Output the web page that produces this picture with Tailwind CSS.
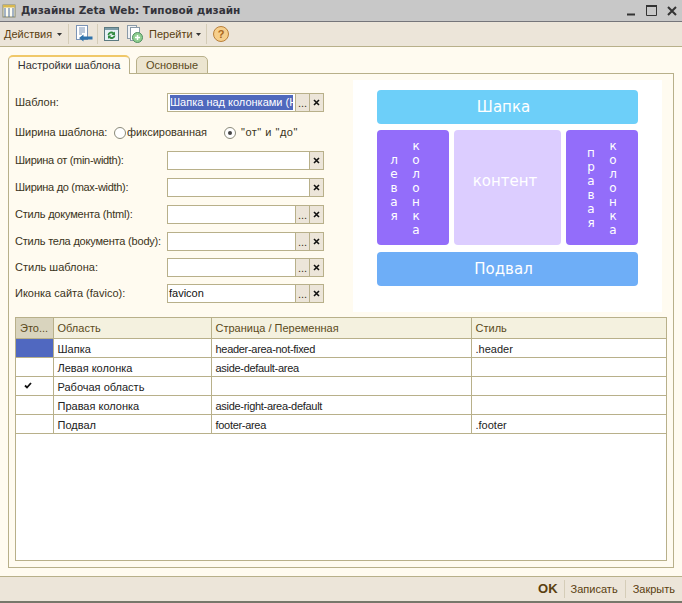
<!DOCTYPE html>
<html lang="ru">
<head>
  <meta charset="UTF-8">
  <title>Дизайны Zeta Web: Типовой дизайн</title>
  <script src="https://cdn.jsdelivr.net/npm/@tailwindcss/browser@4"></script>
</head>
<body class="bg-[#fffbf0] font-['Liberation_Sans',sans-serif] text-[11px] text-[#3a3320]">
<div class="w-[682px] h-[603px] flex flex-col overflow-hidden">

  <!-- Title bar -->
  <header class="h-[22px] bg-[#c8c8c8] border-b border-[#75757a] flex items-center pl-[2px] pr-[5px]">
    <svg width="14" height="14" viewBox="0 0 14 14" class="mr-[5px]">
      <rect x="1" y="1" width="12" height="12" fill="#fdfcf0" stroke="#8a8a6a"/>
      <rect x="1" y="1" width="12" height="2.500" fill="#d8b850"/>
      <path d="M3 4v9M7 4v9M11 4v9" stroke="#4a6a9a"/>
    </svg>
    <span class="font-['DejaVu_Sans',sans-serif] font-bold text-[10.5px] text-[#33333a]">Дизайны Zeta Web: Типовой дизайн</span>
    <div class="ml-auto flex items-center gap-[10px]">
      <svg width="9" height="11" viewBox="0 0 9 11"><path d="M0 9.500h8" stroke="#333" stroke-width="2"/></svg>
      <svg width="11" height="11" viewBox="0 0 11 11"><path d="M.5 1.500h10v9H.5z" fill="none" stroke="#333"/><path d="M0 1h11" stroke="#333" stroke-width="2"/></svg>
      <svg width="10" height="10" viewBox="0 0 10 10"><path d="M1 1l8 8M9 1l-8 8" stroke="#333" stroke-width="2"/></svg>
    </div>
  </header>

  <!-- Toolbar -->
  <nav class="h-[25px] bg-[#ece5d9] border-b border-[#b8b08a] flex items-center pl-[4px] text-[#5a4010]">
    <span class="w-[49px] whitespace-nowrap">Действия</span>
    <svg width="5" height="3" viewBox="0 0 5 3" class="ml-[4px]"><path d="M0 0h5L2.500 3z" fill="#333"/></svg>
    <div class="w-px h-[20px] bg-[#d5cdb8] ml-[6px]"></div>
    <svg width="18" height="18" viewBox="0 0 18 18" class="ml-[6px]">
      <rect x="1.500" y=".5" width="11" height="14" fill="#fff" stroke="#7b93b5"/>
      <path d="M4 3h6M4 5h6M4 7h6M4 9h3" stroke="#7b93b5"/>
      <path d="M4 13l4.500-3.500v2h9v3h-9v2z" fill="#2f72ab"/>
    </svg>
    <div class="w-px h-[20px] bg-[#d5cdb8] ml-[4px]"></div>
    <svg width="15" height="14" viewBox="0 0 15 14" class="ml-[6px]">
      <rect x=".5" y=".5" width="14" height="13" fill="#e7f0f5" stroke="#5b7a80"/>
      <rect x="1" y="1" width="13" height="2" fill="#7d9da8"/>
      <path d="M3.500 8a4 4 0 0 1 6.500-2.500l1-1V8H7.500l1.200-1.200A2.300 2.300 0 0 0 5.200 8z" fill="#2f8a3f"/>
      <path d="M11.500 8.500a4 4 0 0 1-6.500 2.500l-1 1V8.500h3.500l-1.200 1.200a2.300 2.300 0 0 0 3.500-1.200z" fill="#2f8a3f"/>
    </svg>
    <svg width="16" height="18" viewBox="0 0 16 18" class="ml-[8px]">
      <rect x=".5" y=".5" width="9" height="13" fill="#f0f2f4" stroke="#8a9aa8"/>
      <rect x="3.500" y="2.500" width="9" height="13" fill="#fff" stroke="#8a9aa8"/>
      <circle cx="10.500" cy="12.500" r="5" fill="#8fcf90" stroke="#4f8f60"/>
      <path d="M10.500 10v5M8 12.500h5" stroke="#fff" stroke-width="1.500"/>
    </svg>
    <span class="ml-[6px] w-[42px] whitespace-nowrap">Перейти</span>
    <svg width="5" height="3" viewBox="0 0 5 3" class="ml-[5px]"><path d="M0 0h5L2.500 3z" fill="#333"/></svg>
    <div class="w-px h-[20px] bg-[#d5cdb8] ml-[5px]"></div>
    <div class="ml-[6px] w-[16px] h-[16px] rounded-full border border-[#b9803a] bg-[#f6cf8c] flex items-center justify-center text-[11px] font-bold text-[#a8661c]">?</div>
  </nav>

  <!-- Tabs and panel -->
  <main class="flex-1 px-[8px] pt-[8px] pb-[8px] flex flex-col min-h-0">
    <div class="flex items-end h-[19px] relative z-10">
      <div class="w-[122px] h-[19px] bg-[#fffbf0] border border-b-0 border-[#b8b08a] border-t-2 border-t-[#f0c868] rounded-t-[5px] flex items-center justify-center text-[#333]">Настройки шаблона</div>
      <div class="w-[72px] h-[18px] ml-[6px] bg-[#ece5d0] border border-[#b8b08a] rounded-t-[5px] flex items-center justify-center text-[#5a4a20]">Основные</div>
    </div>
    <section class="flex-1 min-h-0 -mt-px border border-[#b8b08a] px-[6px] pt-[6px] pb-[6px] flex flex-col">
      <div class="flex">
        <!-- Form -->
        <div class="w-[309px] pt-[13px] flex flex-col">
          <div class="flex items-center h-[19px]">
            <label class="w-[152px]">Шаблон:</label>
            <div class="w-[157px] h-[19px] flex border border-[#b8b08a] bg-white">
              <div class="flex-1 min-w-0 pl-[2px] pt-[1px]"><div class="w-[123px] h-[15px] overflow-hidden whitespace-nowrap leading-[15px] bg-[#4f68bd] text-white">Шапка над колонками (Н</div></div>
              <button class="w-[14px] bg-[#ece5d9] border-l border-[#b8b08a] text-[11px] leading-[14px]">...</button>
              <button class="w-[14px] bg-[#ece5d9] border-l border-[#b8b08a] flex items-center justify-center"><svg width="7" height="7" viewBox="0 0 7 7"><path d="M1 1l5 5M6 1l-5 5" stroke="#111" stroke-width="1.600"/></svg></button>
            </div>
          </div>
          <div class="flex items-center h-[19px] mt-[11px]">
            <label class="w-[99px] whitespace-nowrap">Ширина шаблона:</label>
            <span class="w-[12px] h-[12px] rounded-full border border-[#8a8a7a] bg-white"></span>
            <span class="w-[98px] pl-[1px]">фиксированная</span>
            <span class="w-[12px] h-[12px] rounded-full border border-[#8a8a7a] bg-white flex items-center justify-center"><span class="w-[4px] h-[4px] rounded-full bg-[#444]"></span></span>
            <span class="ml-[5px] tracking-[0.5px]">"от" и "до"</span>
          </div>
          <div class="flex items-center h-[19px] mt-[9px]">
            <label class="w-[152px] tracking-[-0.3px]">Ширина от (min-width):</label>
            <div class="w-[157px] h-[19px] flex border border-[#b8b08a] bg-white">
              <div class="flex-1"></div>
              <button class="w-[14px] bg-[#ece5d9] border-l border-[#b8b08a] flex items-center justify-center"><svg width="7" height="7" viewBox="0 0 7 7"><path d="M1 1l5 5M6 1l-5 5" stroke="#111" stroke-width="1.600"/></svg></button>
            </div>
          </div>
          <div class="flex items-center h-[19px] mt-[8px]">
            <label class="w-[152px] tracking-[-0.3px]">Ширина до (max-width):</label>
            <div class="w-[157px] h-[19px] flex border border-[#b8b08a] bg-white">
              <div class="flex-1"></div>
              <button class="w-[14px] bg-[#ece5d9] border-l border-[#b8b08a] flex items-center justify-center"><svg width="7" height="7" viewBox="0 0 7 7"><path d="M1 1l5 5M6 1l-5 5" stroke="#111" stroke-width="1.600"/></svg></button>
            </div>
          </div>
          <div class="flex items-center h-[19px] mt-[8px]">
            <label class="w-[152px] tracking-[-0.2px]">Стиль документа (html):</label>
            <div class="w-[157px] h-[19px] flex border border-[#b8b08a] bg-white">
              <div class="flex-1"></div>
              <button class="w-[14px] bg-[#ece5d9] border-l border-[#b8b08a] text-[11px] leading-[14px]">...</button>
              <button class="w-[14px] bg-[#ece5d9] border-l border-[#b8b08a] flex items-center justify-center"><svg width="7" height="7" viewBox="0 0 7 7"><path d="M1 1l5 5M6 1l-5 5" stroke="#111" stroke-width="1.600"/></svg></button>
            </div>
          </div>
          <div class="flex items-center h-[19px] mt-[8px]">
            <label class="w-[152px] whitespace-nowrap tracking-[-0.2px]">Стиль тела документа (body):</label>
            <div class="w-[157px] h-[19px] flex border border-[#b8b08a] bg-white">
              <div class="flex-1"></div>
              <button class="w-[14px] bg-[#ece5d9] border-l border-[#b8b08a] text-[11px] leading-[14px]">...</button>
              <button class="w-[14px] bg-[#ece5d9] border-l border-[#b8b08a] flex items-center justify-center"><svg width="7" height="7" viewBox="0 0 7 7"><path d="M1 1l5 5M6 1l-5 5" stroke="#111" stroke-width="1.600"/></svg></button>
            </div>
          </div>
          <div class="flex items-center h-[19px] mt-[7px]">
            <label class="w-[152px]">Стиль шаблона:</label>
            <div class="w-[157px] h-[19px] flex border border-[#b8b08a] bg-white">
              <div class="flex-1"></div>
              <button class="w-[14px] bg-[#ece5d9] border-l border-[#b8b08a] text-[11px] leading-[14px]">...</button>
              <button class="w-[14px] bg-[#ece5d9] border-l border-[#b8b08a] flex items-center justify-center"><svg width="7" height="7" viewBox="0 0 7 7"><path d="M1 1l5 5M6 1l-5 5" stroke="#111" stroke-width="1.600"/></svg></button>
            </div>
          </div>
          <div class="flex items-center h-[19px] mt-[7px]">
            <label class="w-[152px]">Иконка сайта (favico):</label>
            <div class="w-[157px] h-[19px] flex border border-[#b8b08a] bg-white">
              <div class="flex-1 pl-[1px] leading-[17px] text-[#111]">favicon</div>
              <button class="w-[14px] bg-[#ece5d9] border-l border-[#b8b08a] text-[11px] leading-[14px]">...</button>
              <button class="w-[14px] bg-[#ece5d9] border-l border-[#b8b08a] flex items-center justify-center"><svg width="7" height="7" viewBox="0 0 7 7"><path d="M1 1l5 5M6 1l-5 5" stroke="#111" stroke-width="1.600"/></svg></button>
            </div>
          </div>
        </div>

        <!-- Layout preview -->
        <div class="ml-[29px] w-[309px] h-[232px] bg-white pt-[10px] pl-[24px] font-['DejaVu_Sans',sans-serif] text-white">
          <div class="w-[261px] flex flex-col">
            <div class="h-[34px] rounded-[4px] bg-[#6dcff9] flex items-center justify-center pr-[8px] text-[15px]">Шапка</div>
            <div class="h-[115px] mt-[6px] flex gap-[5px]">
              <div class="w-[72px] rounded-[4px] bg-[#936dfa] flex justify-center items-center gap-[8px] pr-[16px] text-[12px] leading-[14px]">
                <span class="[writing-mode:vertical-rl] [text-orientation:upright]">левая</span>
                <span class="[writing-mode:vertical-rl] [text-orientation:upright]">колонка</span>
              </div>
              <div class="w-[107px] rounded-[4px] bg-[#dccdff] flex items-center justify-center pb-[13px] pr-[5px] text-[15px]">контент</div>
              <div class="w-[72px] rounded-[4px] bg-[#936dfa] flex justify-center items-center gap-[8px] text-[12px] leading-[14px]">
                <span class="[writing-mode:vertical-rl] [text-orientation:upright]">правая</span>
                <span class="[writing-mode:vertical-rl] [text-orientation:upright]">колонка</span>
              </div>
            </div>
            <div class="h-[34px] mt-[7px] rounded-[4px] bg-[#6eaef7] flex items-center justify-center pr-[8px] text-[15px]">Подвал</div>
          </div>
        </div>
      </div>

      <!-- Regions table -->
      <div class="mt-[5px] flex-1 min-h-0 border border-[#b8b08a] bg-white">
        <table class="w-full table-fixed border-collapse text-[11px] leading-[14px] text-[#222]">
          <colgroup>
            <col class="w-[37px]"><col class="w-[158px]"><col class="w-[260px]"><col>
          </colgroup>
          <thead>
            <tr class="h-[20px] bg-[#f4f1df] text-[#5a4a20] text-left">
              <th class="font-normal pl-[4px] bg-[#d9d4be] border-r border-b border-[#b8b08a]">Это...</th>
              <th class="font-normal pl-[4px] border-r border-b border-[#b8b08a]">Область</th>
              <th class="font-normal pl-[4px] border-r border-b border-[#b8b08a]">Страница / Переменная</th>
              <th class="font-normal pl-[4px] border-b border-[#b8b08a]">Стиль</th>
            </tr>
          </thead>
          <tbody>
            <tr class="h-[19px]">
              <td class="bg-[#5068c0] border-r border-b border-[#b8b08a]"></td>
              <td class="pl-[4px] pt-[2px] border-r border-b border-[#b8b08a]">Шапка</td>
              <td class="pl-[4px] pt-[2px] tracking-[-0.3px] border-r border-b border-[#b8b08a]">header-area-not-fixed</td>
              <td class="pl-[4px] pt-[2px] border-b border-[#b8b08a]">.header</td>
            </tr>
            <tr class="h-[19px]">
              <td class="border-r border-b border-[#b8b08a]"></td>
              <td class="pl-[4px] pt-[2px] border-r border-b border-[#b8b08a]">Левая колонка</td>
              <td class="pl-[4px] pt-[2px] tracking-[-0.3px] border-r border-b border-[#b8b08a]">aside-default-area</td>
              <td class="border-b border-[#b8b08a]"></td>
            </tr>
            <tr class="h-[19px]">
              <td class="border-r border-b border-[#b8b08a] pl-[8px]"><svg width="8" height="7" viewBox="0 0 8 7"><path d="M1 3.500l2 2L7 1" fill="none" stroke="#111" stroke-width="1.800"/></svg></td>
              <td class="pl-[4px] pt-[2px] border-r border-b border-[#b8b08a]">Рабочая область</td>
              <td class="border-r border-b border-[#b8b08a]"></td>
              <td class="border-b border-[#b8b08a]"></td>
            </tr>
            <tr class="h-[19px]">
              <td class="border-r border-b border-[#b8b08a]"></td>
              <td class="pl-[4px] pt-[2px] border-r border-b border-[#b8b08a]">Правая колонка</td>
              <td class="pl-[4px] pt-[2px] tracking-[-0.3px] border-r border-b border-[#b8b08a]">aside-right-area-default</td>
              <td class="border-b border-[#b8b08a]"></td>
            </tr>
            <tr class="h-[19px]">
              <td class="border-r border-b border-[#b8b08a]"></td>
              <td class="pl-[4px] pt-[2px] border-r border-b border-[#b8b08a]">Подвал</td>
              <td class="pl-[4px] pt-[2px] tracking-[-0.3px] border-r border-b border-[#b8b08a]">footer-area</td>
              <td class="pl-[4px] pt-[2px] border-b border-[#b8b08a]">.footer</td>
            </tr>
          </tbody>
        </table>
      </div>
    </section>
  </main>

  <!-- Bottom bar -->
  <footer class="h-[27px] bg-[#ece5d9] border-t border-[#b8b08a] border-b-2 border-b-[#77776a] flex items-center justify-end pr-[7px] text-[#5a4010]">
    <span class="font-bold text-[13px]">OK</span>
    <div class="w-px h-[18px] bg-[#d5cdb8] mx-[6px]"></div>
    <span>Записать</span>
    <div class="w-px h-[18px] bg-[#d5cdb8] mx-[7px]"></div>
    <span>Закрыть</span>
  </footer>
</div>
</body>
</html>
